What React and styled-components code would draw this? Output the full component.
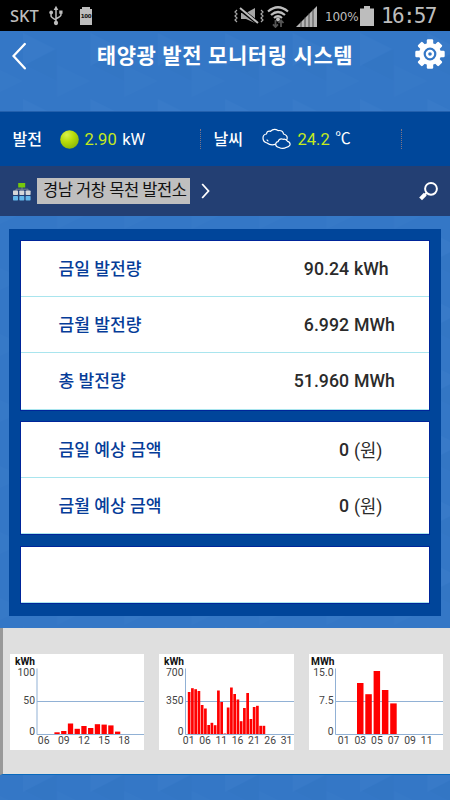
import styled, { createGlobalStyle } from "styled-components";

const GlobalStyle = createGlobalStyle`
  * {
    box-sizing: border-box;
  }
  body {
    margin: 0;
    background-color: #3477c6;
    font-family: Roboto, "Noto Sans CJK KR", sans-serif;
  }
  svg {
    display: block;
    flex-shrink: 0;
  }
`;

const Screen = styled.div`
  position: relative;
  width: 450px;
  height: 800px;
  overflow: hidden;
  display: flex;
  flex-direction: column;
  isolation: isolate;
`;
const Backdrop = styled.svg`
  position: absolute;
  inset: 0;
  z-index: -1;
`;
const StatusBar = styled.div`
  height: 31px;
  display: flex;
  align-items: center;
  background-color: #000;
  color: #bdbdbd;
`;
const Carrier = styled.span`
  width: 31px;
  margin: 0 8px 0 10px;
  font-family: "Noto Sans", sans-serif;
  font-size: 16.5px;
  font-weight: 500;
  line-height: 31px;
`;
const Percent = styled.span`
  width: 35px;
  margin-left: 8px;
  padding-top: 3px;
  font-family: "DejaVu Sans", sans-serif;
  font-size: 12px;
  letter-spacing: -0.2px;
`;
const Clock = styled.span`
  margin-left: 7px;
  font-family: "DejaVu Sans Mono", monospace;
  font-size: 21px;
  letter-spacing: -1.7px;
`;
const Header = styled.div`
  height: 80px;
  padding: 7px 5px 0 12px;
  display: flex;
  justify-content: space-between;
  align-items: flex-start;
`;
const Title = styled.h1`
  margin: 0;
  padding-left: 13px;
  font-size: 21px;
  font-weight: 700;
  line-height: 36px;
  letter-spacing: 0.6px;
  white-space: nowrap;
  color: #fff;
  transform: translate(-2.5px, -0.5px);
`;
const InfoBar = styled.div`
  height: 55px;
  display: flex;
  align-items: center;
  background-color: #00479a;
  border-top: 1px solid #2260ad;
  color: #fff;
  font-size: 16.5px;
`;
const InfoItem = styled.div`
  width: ${(props) => props.$width}px;
  height: 20px;
  display: flex;
  align-items: center;
  padding-left: 12.5px;
  border-right: 1px dotted #7d7487;
  white-space: nowrap;
`;
const InfoLabel = styled.span`
  width: ${(props) => props.$width}px;
  padding-bottom: 3px;
  font-size: 16px;
  font-weight: 500;
`;
const InfoValue = styled.span`
  margin: 0 5.5px 0 ${(props) => props.$left}px;
  color: #c4ea1d;
`;
const Celsius = styled.span`
  padding-bottom: 4px;
  font-size: 15.5px;
`;
const SiteBar = styled.div`
  height: 50px;
  padding: 0 11px 0 13px;
  display: flex;
  align-items: center;
  background-color: #233f73;
`;
const SiteName = styled.div`
  width: 153px;
  height: 26px;
  margin: 0 11px 0 6px;
  padding-left: 6px;
  background-color: #bfbfbf;
  font-size: 16.5px;
  line-height: 25px;
  letter-spacing: -0.45px;
  white-space: nowrap;
  color: #111;
`;
const Spacer = styled.div`
  flex: 1;
`;
const Panel = styled.div`
  height: 387px;
  margin: 13px 9px 12px;
  padding: 12px;
  display: flex;
  flex-direction: column;
  gap: 12.5px;
  background-color: #00459a;
`;
const Card = styled.div`
  background-color: #fff;
  outline: 1px solid #00259a;
`;
const Row = styled.div`
  height: 56.2px;
  padding-left: 37.5px;
  display: grid;
  grid-template-columns: 130px 160.5px 1fr;
  align-items: center;
  border-bottom: 1px solid #a9e5ee;
  font-size: 17.7px;
  font-weight: 500;
  white-space: nowrap;
  color: #2b2b2b;
`;
const RowLabel = styled.span`
  padding-bottom: 2px;
  font-size: 17.1px;
  color: #053c98;
`;
const Amount = styled.span`
  text-align: right;
`;
const Unit = styled.span`
  padding-left: 5px;
  ${(props) => props.$light && "font-weight: 400; padding-bottom: 2px;"}
`;
const ChartStrip = styled.div`
  height: 147px;
  padding: 2px 0 0 7px;
  display: flex;
  align-items: center;
  gap: 15px;
  background-color: #dfdfdf;
  border-left: 3px solid #999;
  border-bottom: 1px solid #0869bd;
`;
const ChartText = styled.text`
  font-family: Roboto, sans-serif;
  font-size: ${(props) => (props.$bold ? 10.2 : 10.4)}px;
  font-weight: ${(props) => (props.$bold ? 700 : 400)};
  fill: ${(props) => (props.$bold ? "#111" : "#444")};
`;

const charts = [
  {
    unit: "kWh",
    unitX: 5,
    width: 134,
    axis: 27,
    scale: ["100", "50", "0"],
    labels: ["06", "09", "12", "15", "18"],
    labelStart: 33.7,
    labelStep: 20.1,
    barStart: 44.4,
    barStep: 6.73,
    barWidth: 5.3,
    bars: [1.7, 3, 10.5, 5.2, 8, 6, 9.8, 9.4, 8.6, 2.4],
  },
  {
    unit: "kWh",
    unitX: 5,
    width: 135,
    axis: 26.5,
    scale: ["700", "350", "0"],
    labels: ["01", "06", "11", "16", "21", "26", "31"],
    labelStart: 29.7,
    labelStep: 16.3,
    barStart: 28.8,
    barStep: 3.25,
    barWidth: 2.7,
    bars: [
      42, 45.8, 44.8, 43, 29, 25.5, 9, 11.2, 8.8, 43.5, 32, 0.5, 26.5, 46.5, 40,
      34.5, 12.8, 26, 41, 15, 27, 28.2, 8.2, 8.2,
    ],
  },
  {
    unit: "MWh",
    unitX: 2,
    width: 134,
    axis: 26.5,
    scale: ["15.0", "7.5", "0"],
    labels: ["01", "03", "05", "07", "09", "11"],
    labelStart: 34.7,
    labelStep: 16.6,
    barStart: 48,
    barStep: 8.3,
    barWidth: 6.5,
    bars: [51, 39.8, 63, 44, 30.6],
  },
];

const MiniChart = ({ chart }) => (
  <svg width={chart.width} height="96" viewBox={`0 0 ${chart.width} 96`}>
    <rect width={chart.width} height="96" fill="#fff" />
    <ChartText $bold x={chart.unitX} y="11">
      {chart.unit}
    </ChartText>
    {chart.scale.map((value, i) => (
      <ChartText
        key={value}
        x={chart.axis - 2}
        y={[22, 50, 80.5][i]}
        textAnchor="end"
      >
        {value}
      </ChartText>
    ))}
    <path
      d={`M${chart.axis} 14.5V80.5H${chart.width}M${chart.axis} 47.5H${chart.width}`}
      fill="none"
      stroke="#91b1d5"
    />
    {chart.bars.map((height, i) => (
      <rect
        key={i}
        x={chart.barStart + i * chart.barStep}
        y={80 - height}
        width={chart.barWidth}
        height={height}
        fill="#f00"
      />
    ))}
    {chart.labels.map((label, i) => (
      <ChartText
        key={label}
        x={chart.labelStart + i * chart.labelStep}
        y="90"
        textAnchor="middle"
      >
        {label}
      </ChartText>
    ))}
  </svg>
);

const groups = [
  [
    ["금일 발전량", "90.24", "kWh"],
    ["금월 발전량", "6.992", "MWh"],
    ["총 발전량", "51.960", "MWh"],
  ],
  [
    ["금일 예상 금액", "0", "(원)"],
    ["금월 예상 금액", "0", "(원)"],
  ],
  [["", "", ""]],
];

const TrianglePattern = () => (
  <Backdrop width="450" height="800">
    <defs>
      <pattern
        id="triangles"
        x="23"
        y="31"
        width="67.4"
        height="66"
        patternUnits="userSpaceOnUse"
      >
        <path d="M0 2L32 18L0 35z" fill="#3e80cc" />
        <path d="M34 18V50L2 34z" fill="#3173c1" />
        <path d="M34 34L67 50L34 66z" fill="#3b7cc9" />
      </pattern>
    </defs>
    <rect width="450" height="800" fill="#3477c6" />
    <rect width="450" height="800" fill="url(#triangles)" opacity="0.35" />
  </Backdrop>
);

const UsbIcon = () => (
  <svg width="14" height="22" viewBox="0 0 15 22">
    <g fill="none" stroke="#bdbdbd" strokeWidth="1.6">
      <path d="M7.5 3V18M2.2 8V11Q2.2 12.5 7.5 15.3M12.8 7V10Q12.8 11.5 7.5 14" />
    </g>
    <path d="M7.5 0L10 4.5H5zM11 5H14.5V8.5H11z" fill="#bdbdbd" />
    <circle cx="2.3" cy="7.2" r="2" fill="#bdbdbd" />
    <circle cx="7.5" cy="18.5" r="2.3" fill="#bdbdbd" />
  </svg>
);

const BatteryBadge = styled.div`
  width: 12px;
  height: 16px;
  margin: 2px 0 0 17px;
  background-color: #bdbdbd;
  font-family: "DejaVu Sans", sans-serif;
  font-size: 5.5px;
  font-weight: 700;
  line-height: 15px;
  text-align: center;
  letter-spacing: -0.4px;
  color: #111;
  &::before {
    content: "";
    display: block;
    width: 8px;
    height: 2px;
    margin: -2px auto 0;
    background-color: #bdbdbd;
  }
`;

const MuteIcon = () => (
  <svg width="30" height="18" viewBox="0 0 30 18">
    <path d="M7 6H12L21 1V16L12 12H7z" fill="#a6a6a6" />
    <path d="M6 2L24 16" stroke="#000" strokeWidth="4" />
    <path d="M6 1L24 16" stroke="#bdbdbd" strokeWidth="2" />
    <path
      d="M3 3L1 5L3 7L1 9L3 11L1 13L3 15M27 3L29 5L27 7L29 9L27 11L29 13L27 15"
      fill="none"
      stroke="#a6a6a6"
      strokeWidth="1.2"
    />
  </svg>
);

const WifiIcon = () => (
  <svg width="22" height="22" viewBox="0 0 22 22">
    <g fill="none" stroke="#bdbdbd" strokeWidth="2.2">
      <path d="M1 5.5Q11-3 21 5.5M4 9Q11 3 18 9M7 12Q11 8.5 15 12" />
    </g>
    <circle cx="11" cy="13.5" r="2" fill="#bdbdbd" />
    <path
      d="M8.5 14V20.5M6 18.3L8.5 21L11 18.3M14 21V15M11.5 17L14 14.3L16.5 17"
      fill="none"
      stroke="#555"
      strokeWidth="1.8"
    />
  </svg>
);

const SignalIcon = () => (
  <svg width="21" height="21" viewBox="0 0 21 21">
    <path d="M0 21L21 0V21z" fill="#b5b5b5" />
    <path d="M5 15V21M9 11V21M13 7V21M17 3V21" stroke="#333" strokeWidth="0.8" />
  </svg>
);

const StatusIcons = styled.div`
  margin-left: 142px;
  display: flex;
  align-items: center;
  > svg:nth-child(2) {
    margin: 2px 0 0 3px;
  }
  > svg:nth-child(3) {
    margin: 1px 0 0 7px;
  }
`;

const BatteryIcon = () => (
  <svg width="14" height="20" viewBox="0 0 14 20">
    <path d="M4 0H10V2.5H14V20H0V2.5H4z" fill="#bdbdbd" />
  </svg>
);

const BackIcon = () => (
  <svg width="15" height="36" viewBox="0 0 15 36">
    <path
      d="M12.8 6L1.5 18L12.8 30.3"
      fill="none"
      stroke="#fff"
      strokeWidth="2.3"
      strokeLinecap="round"
    />
  </svg>
);

const GearIcon = () => (
  <svg width="30" height="32" viewBox="-15 -16 30 32">
    {[0, 45, 90, 135].map((angle) => (
      <rect
        key={angle}
        x="-3.2"
        y="-14.7"
        width="6.4"
        height="29.4"
        rx="1.2"
        fill="#fff"
        transform={`rotate(${angle})`}
      />
    ))}
    <circle r="11" fill="#fff" />
    <circle r="5.3" fill="#fff" stroke="#3477c6" strokeWidth="2.2" />
    <circle r="1.8" fill="#3477c6" />
  </svg>
);

const PowerIcon = () => (
  <svg width="19" height="20" viewBox="0 0 19 20">
    <defs>
      <radialGradient id="ball" cx="0.35" cy="0.25" r="0.75">
        <stop stopColor="#d9f34b" />
        <stop offset="0.5" stopColor="#b9dc0b" />
        <stop offset="1" stopColor="#8fbb08" />
      </radialGradient>
    </defs>
    <circle cx="9.5" cy="10.5" r="9.3" fill="url(#ball)" />
  </svg>
);

const CloudIcon = () => (
  <svg width="29" height="22" viewBox="0 0 29 22">
    <g fill="#00479a" stroke="#fff" strokeWidth="1.2" strokeLinejoin="round">
      <path d="M5 15Q1 14 1 10Q1 6.5 4.5 6Q5 2.5 8.5 3.3Q12 0 16 2.6Q21 2 21.5 6Q26 7.3 25 11Q24 14 20 15Q17 17 14 16Q9 18 5 15z" />
      <path d="M17 19.5Q13.5 19 13.7 16Q14 13.8 16 13.7Q17.5 10 21 11.3Q24 10.5 25.5 13.3Q28.5 14 28 17Q27 19 24.5 19.3Q21 21.5 17 19.5z" />
      <path d="M5 11.5Q5 13 6.5 13" fill="none" />
    </g>
  </svg>
);

const SiteIcon = () => (
  <svg width="18" height="19" viewBox="0 0 18 19">
    <path d="M9 5V8M3 9V7.2H15V9" fill="none" stroke="#77828f" />
    <rect x="5.2" y="1" width="7" height="4.5" fill="#75c80b" />
    {[0, 6.3, 12.6].map((x) => (
      <g key={x}>
        <rect x={x} y="8.5" width="5" height="4.5" rx="0.7" fill="#d5d7d9" />
        <rect x={x} y="14" width="5" height="4.5" rx="0.7" fill="#64b7ea" />
      </g>
    ))}
  </svg>
);

const NextIcon = () => (
  <svg width="9" height="16" viewBox="0 0 9 16">
    <path d="M1.2 1L7.5 8L1.2 15" fill="none" stroke="#fff" strokeWidth="1.8" />
  </svg>
);

const SearchIcon = () => (
  <svg width="21" height="21" viewBox="0 0 21 21">
    <circle cx="13" cy="7.8" r="5.9" fill="none" stroke="#fff" strokeWidth="2" />
    <path d="M9 11.5L7 13.5" stroke="#fff" strokeWidth="2" />
    <path d="M7.3 13.2L2.6 17.9" stroke="#fff" strokeWidth="4" />
  </svg>
);

export default function App() {
  return (
    <>
      <GlobalStyle />
      <Screen>
        <TrianglePattern />
        <StatusBar>
          <Carrier>SKT</Carrier>
          <UsbIcon />
          <BatteryBadge>100</BatteryBadge>
          <StatusIcons>
            <MuteIcon />
            <WifiIcon />
            <SignalIcon />
          </StatusIcons>
          <Percent>100%</Percent>
          <BatteryIcon />
          <Clock>16:57</Clock>
        </StatusBar>
        <Header>
          <BackIcon />
          <Title>태양광 발전 모니터링 시스템</Title>
          <GearIcon />
        </Header>
        <InfoBar>
          <InfoItem $width={201}>
            <InfoLabel $width={47}>발전</InfoLabel>
            <PowerIcon />
            <InfoValue $left={6}>2.90</InfoValue>
            kW
          </InfoItem>
          <InfoItem $width={201}>
            <InfoLabel $width={48}>날씨</InfoLabel>
            <CloudIcon />
            <InfoValue $left={7}>24.2</InfoValue>
            <Celsius>℃</Celsius>
          </InfoItem>
        </InfoBar>
        <SiteBar>
          <SiteIcon />
          <SiteName>경남 거창 목천 발전소</SiteName>
          <NextIcon />
          <Spacer />
          <SearchIcon />
        </SiteBar>
        <Panel>
          {groups.map((rows, i) => (
            <Card key={i}>
              {rows.map(([label, amount, unit]) => (
                <Row key={label}>
                  <RowLabel>{label}</RowLabel>
                  <Amount>{amount}</Amount>
                  <Unit $light={unit === "(원)"}>{unit}</Unit>
                </Row>
              ))}
            </Card>
          ))}
        </Panel>
        <ChartStrip>
          {charts.map((chart, i) => (
            <MiniChart key={i} chart={chart} />
          ))}
        </ChartStrip>
      </Screen>
    </>
  );
}
